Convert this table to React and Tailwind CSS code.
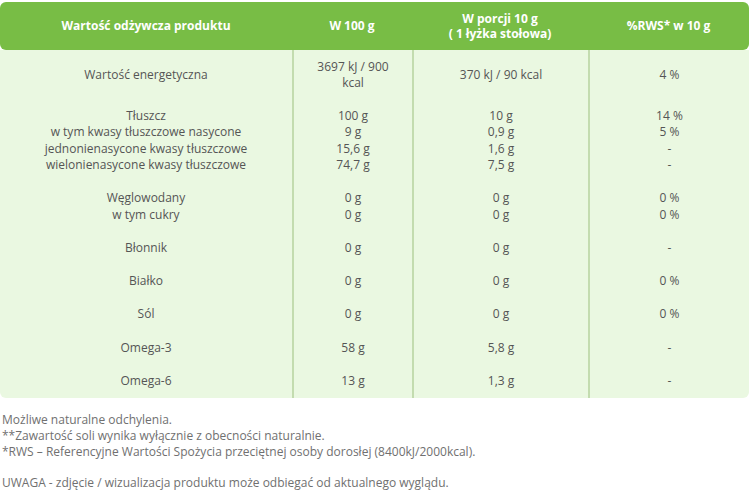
import React from 'react';

const rows = [
    { name: ['Wartość energetyczna'], per100: ['3697 kJ / 900 kcal'], portion: ['370 kJ / 90 kcal'], rws: ['4 %'] },
    {
        name: ['Tłuszcz', 'w tym kwasy tłuszczowe nasycone', 'jednonienasycone kwasy tłuszczowe', 'wielonienasycone kwasy tłuszczowe'],
        per100: ['100 g', '9 g', '15,6 g', '74,7 g'],
        portion: ['10 g', '0,9 g', '1,6 g', '7,5 g'],
        rws: ['14 %', '5 %', '-', '-'],
    },
    { name: ['Węglowodany', 'w tym cukry'], per100: ['0 g', '0 g'], portion: ['0 g', '0 g'], rws: ['0 %', '0 %'] },
    { name: ['Błonnik'], per100: ['0 g'], portion: ['0 g'], rws: ['-'] },
    { name: ['Białko'], per100: ['0 g'], portion: ['0 g'], rws: ['0 %'] },
    { name: ['Sól'], per100: ['0 g'], portion: ['0 g'], rws: ['0 %'] },
    { name: ['Omega-3'], per100: ['58 g'], portion: ['5,8 g'], rws: ['-'] },
    { name: ['Omega-6'], per100: ['13 g'], portion: ['1,3 g'], rws: ['-'] },
];

const Cell = ({ lines, first }) => (
    <div className={`py-[8.5px] px-3 flex flex-col justify-center text-center ${first ? '' : 'border-l-2 border-[#c3dcaf]'}`}>
        {lines.map((l, i) => (
            <div key={i}>{l}</div>
        ))}
    </div>
);

const App = () => {
    return (
        <div className="w-[750px] h-[496px] bg-white pt-[2px] text-[12px] leading-[16.3px] text-[#555]" style={{ fontFamily: '"Open Sans", sans-serif' }}>
            <div className="w-[749px]">
                <div className="grid grid-cols-[292px_120px_176px_1fr] h-[48px] bg-[#78bd45] rounded-md text-white font-bold items-center text-center leading-[15.5px]">
                    <div>Wartość odżywcza produktu</div>
                    <div>W 100 g</div>
                    <div>
                        <div>W porcji 10 g</div>
                        <div>( 1 łyżka stołowa)</div>
                    </div>
                    <div>%RWS* w 10 g</div>
                </div>
                <div className="bg-[#eaf8e1] rounded-b-md grid grid-cols-[292px_120px_176px_1fr]">
                    {rows.map((r, i) => (
                        <React.Fragment key={i}>
                            <Cell lines={r.name} first />
                            <Cell lines={r.per100} />
                            <Cell lines={r.portion} />
                            <Cell lines={r.rws} />
                        </React.Fragment>
                    ))}
                </div>
            </div>
            <div className="pl-[2px] pt-[14px] text-[#707070] leading-[16px]">
                <p>Możliwe naturalne odchylenia.</p>
                <p>**Zawartość soli wynika wyłącznie z obecności naturalnie.</p>
                <p>*RWS – Referencyjne Wartości Spożycia przeciętnej osoby dorosłej (8400kJ/2000kcal).</p>
                <p className="mt-[15px]">UWAGA - zdjęcie / wizualizacja produktu może odbiegać od aktualnego wyglądu.</p>
            </div>
        </div>
    );
};

export default App;
